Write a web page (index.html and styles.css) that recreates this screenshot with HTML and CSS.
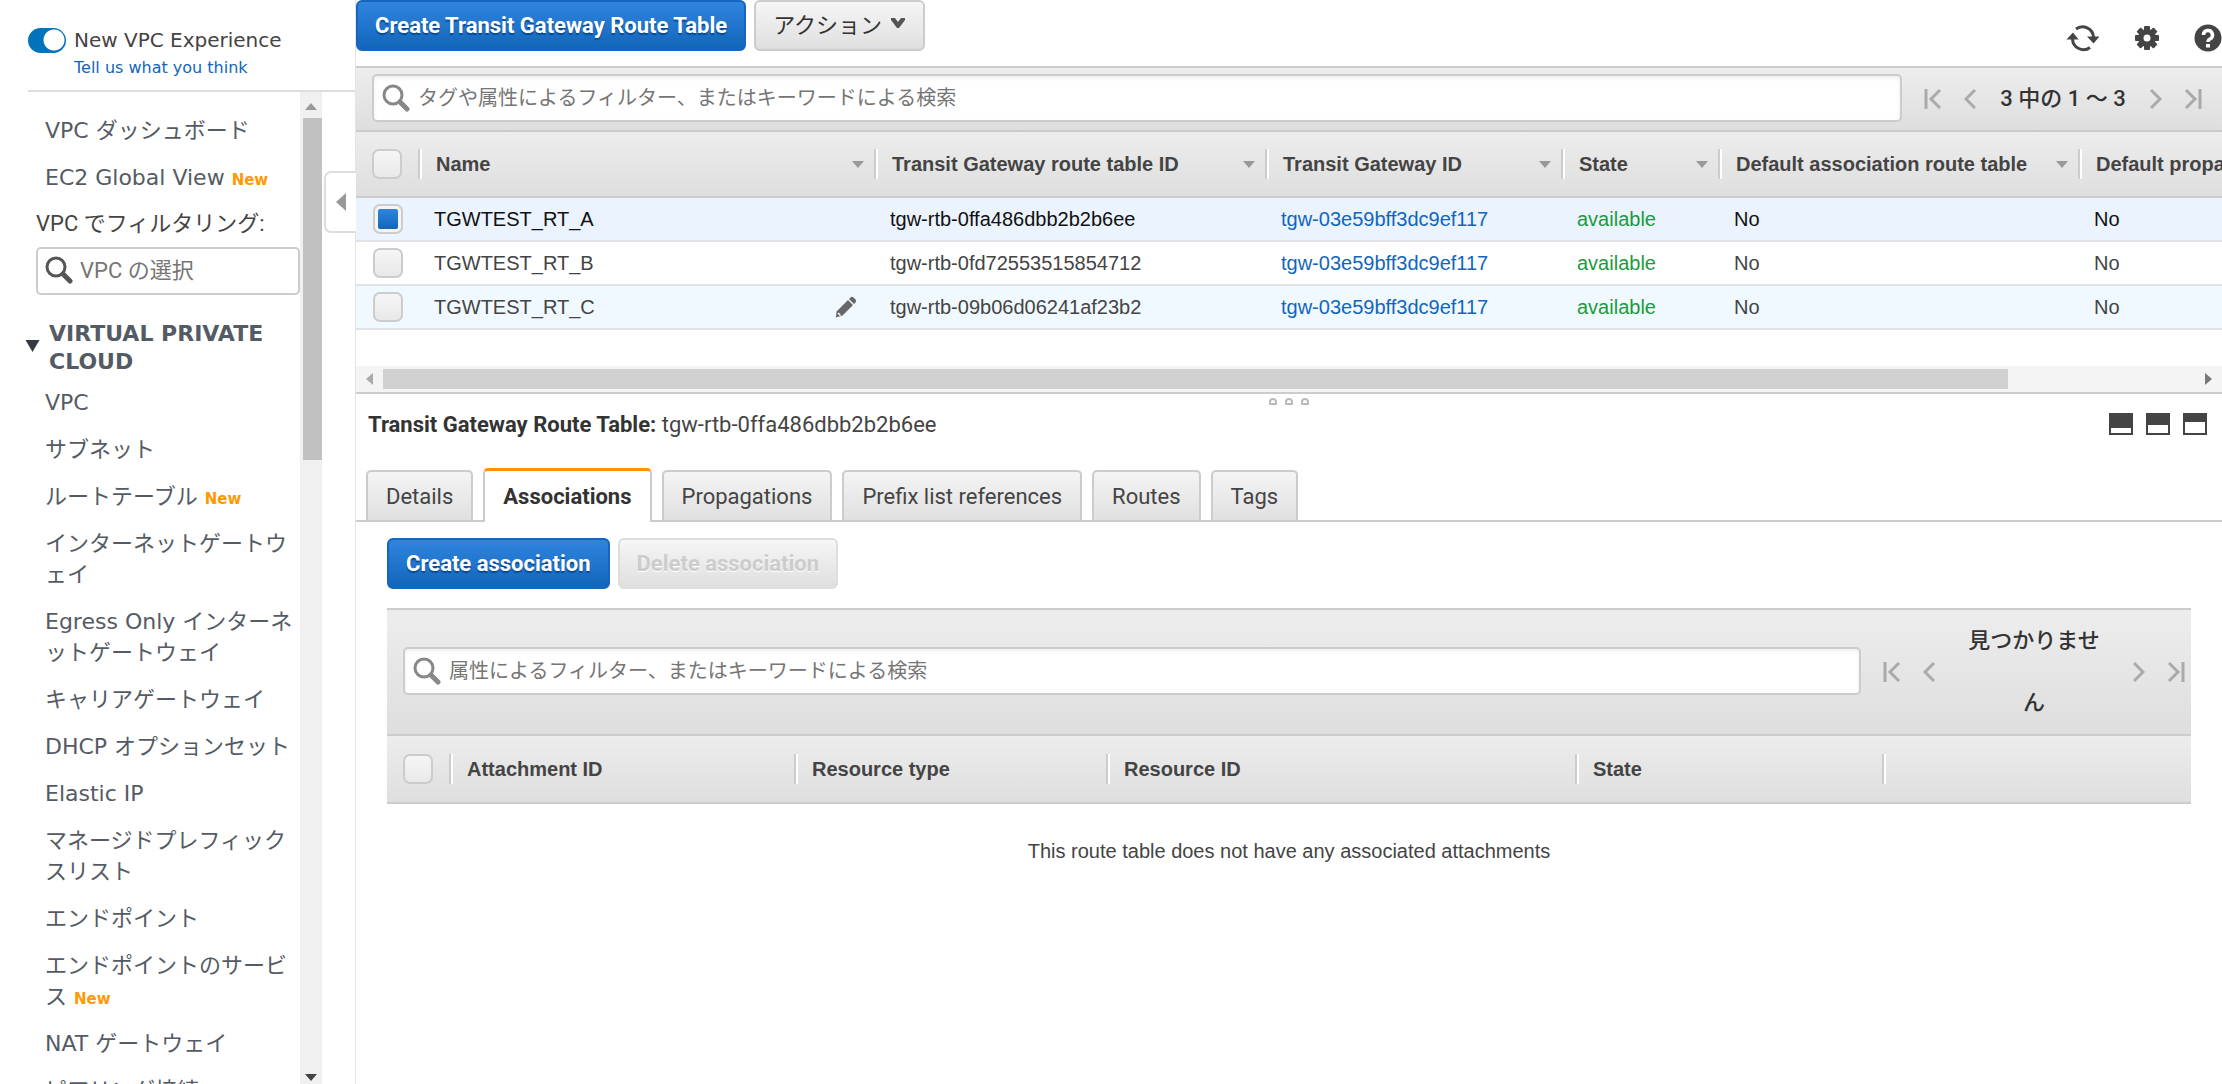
FILE: index.html
```html
<!DOCTYPE html>
<html lang="ja">
<head>
<meta charset="utf-8">
<title>Transit Gateway Route Tables</title>
<link rel="stylesheet" href="styles.css">
</head>
<body>
<svg class="defs" width="0" height="0" aria-hidden="true">
  <symbol id="i-search" viewBox="0 0 28 28"><circle cx="11" cy="11" r="9" fill="none" stroke="currentColor" stroke-width="3"/><path d="M18 18l7 7" stroke="currentColor" stroke-width="5" stroke-linecap="round"/></symbol>
  <symbol id="i-first" viewBox="0 0 18 22"><path d="M2 1v20M16 2L7 11l9 9" fill="none" stroke="currentColor" stroke-width="3"/></symbol>
  <symbol id="i-prev" viewBox="0 0 12 22"><path d="M11 2L2 11l9 9" fill="none" stroke="currentColor" stroke-width="3"/></symbol>
  <symbol id="i-next" viewBox="0 0 12 22"><path d="M1 2l9 9-9 9" fill="none" stroke="currentColor" stroke-width="3"/></symbol>
  <symbol id="i-last" viewBox="0 0 18 22"><path d="M16 1v20M2 2l9 9-9 9" fill="none" stroke="currentColor" stroke-width="3"/></symbol>
</svg>
<div class="app">
  <aside class="sidebar">
    <div class="experience">
      <input type="checkbox" class="switch" id="exp" checked>
      <div class="experience-text">
        <label for="exp">New VPC Experience</label>
        <a href="#feedback">Tell us what you think</a>
      </div>
    </div>
    <div class="side-body">
      <nav class="side-scroll">
        <ul class="links top-links">
          <li><a href="#dashboard">VPC ダッシュボード</a></li>
          <li><a href="#global">EC2 Global View</a> <span class="new">New</span></li>
        </ul>
        <div class="vpc-filter">
          <label for="vpc">VPC でフィルタリング:</label>
          <div class="vpc-box">
            <svg class="ico-search" aria-hidden="true"><use href="#i-search"/></svg>
            <input type="text" id="vpc" placeholder="VPC の選択">
          </div>
        </div>
        <h2><svg class="caret" viewBox="0 0 14 12" aria-hidden="true"><path d="M0 0h14L7 12z"/></svg>VIRTUAL PRIVATE CLOUD</h2>
        <ul class="links">
          <li><a href="#vpc">VPC</a></li>
          <li><a href="#subnet">サブネット</a></li>
          <li><a href="#rt">ルートテーブル</a> <span class="new">New</span></li>
          <li><a href="#igw">インターネットゲートウェイ</a></li>
          <li><a href="#eigw">Egress Only インターネットゲートウェイ</a></li>
          <li><a href="#cgw">キャリアゲートウェイ</a></li>
          <li><a href="#dhcp">DHCP オプションセット</a></li>
          <li><a href="#eip">Elastic IP</a></li>
          <li><a href="#pl">マネージドプレフィックスリスト</a></li>
          <li><a href="#ep">エンドポイント</a></li>
          <li><a href="#eps">エンドポイントのサービス</a> <span class="new">New</span></li>
          <li><a href="#nat">NAT ゲートウェイ</a></li>
          <li><a href="#peer">ピアリング接続</a></li>
        </ul>
      </nav>
      <div class="vbar" aria-hidden="true">
        <svg viewBox="0 0 12 8"><path d="M6 1l6 7H0z" fill="#999"/></svg>
        <div class="vtrack"><div class="vthumb"></div></div>
        <svg viewBox="0 0 12 8"><path d="M0 1h12L6 8z" fill="#444"/></svg>
      </div>
      <button class="collapse" aria-label="メニューを閉じる"><svg viewBox="0 0 10 18"><path d="M10 0v18L0 9z"/></svg></button>
    </div>
  </aside>

  <main>
    <div class="actions">
      <button class="btn primary">Create Transit Gateway Route Table</button>
      <button class="btn menu">アクション <svg class="chev" viewBox="0 0 16 12"><path d="M1 1h4l3 4 3-4h4v2L9 11H7L1 3z"/></svg></button>
      <div class="tools">
        <button aria-label="更新"><svg width="34" height="28" viewBox="0 0 34 28"><g fill="none" stroke="#444" stroke-width="3"><path d="M10 5A11 11 0 0 1 27.500 13"/><path d="M24 23.500A11 11 0 0 1 6.500 15"/></g><path d="M21 12.500h12.500l-6 7zM.5 15.500L7 8.500l5.500 7z" fill="#444"/></svg></button>
        <button aria-label="設定"><svg width="26" height="26" viewBox="-13 -13 26 26"><g fill="#444"><circle r="9"/><g id="teeth"><rect x="-3" y="-12" width="6" height="24" rx="1"/><rect x="-12" y="-3" width="24" height="6" rx="1"/></g><use href="#teeth" transform="rotate(45)"/></g><circle r="3.500" fill="#fff"/></svg></button>
        <button aria-label="ヘルプ"><svg width="28" height="28" viewBox="0 0 28 28"><circle cx="14" cy="14" r="13.500" fill="#444"/><path d="M9.500 11a4.500 4.500 0 1 1 6.500 4q-2 1-2 3" fill="none" stroke="#fff" stroke-width="3.500"/><rect x="12" y="20" width="4" height="3.500" fill="#fff"/></svg></button>
      </div>
    </div>

    <div class="toolbar">
      <div class="search">
        <svg class="ico-search" aria-hidden="true"><use href="#i-search"/></svg>
        <input type="text" aria-label="ルートテーブルの検索" placeholder="タグや属性によるフィルター、またはキーワードによる検索">
      </div>
      <div class="pager">
        <button aria-label="最初"><svg width="18" height="22"><use href="#i-first"/></svg></button>
        <button aria-label="前へ"><svg width="12" height="22"><use href="#i-prev"/></svg></button>
        <span>3 中の 1 ～ 3</span>
        <button aria-label="次へ"><svg width="12" height="22"><use href="#i-next"/></svg></button>
        <button aria-label="最後"><svg width="18" height="22"><use href="#i-last"/></svg></button>
      </div>
    </div>

    <div class="grid-wrap">
      <table class="grid routes">
        <colgroup><col class="c-check"><col class="c-name"><col class="c-rtb"><col class="c-tgw"><col class="c-state"><col class="c-assoc"><col></colgroup>
        <thead>
          <tr>
            <th><input type="checkbox" class="tick" aria-label="すべて選択"></th>
            <th><div class="head sort">Name</div></th>
            <th><div class="head sort">Transit Gateway route table ID</div></th>
            <th><div class="head sort">Transit Gateway ID</div></th>
            <th><div class="head sort">State</div></th>
            <th><div class="head sort">Default association route table</div></th>
            <th><div class="head">Default propagation route table</div></th>
          </tr>
        </thead>
        <tbody>
          <tr class="selected">
            <td><input type="checkbox" class="tick" aria-label="TGWTEST_RT_A" checked></td>
            <td>TGWTEST_RT_A</td><td>tgw-rtb-0ffa486dbb2b2b6ee</td><td><a href="#tgw">tgw-03e59bff3dc9ef117</a></td><td class="ok">available</td><td>No</td><td>No</td>
          </tr>
          <tr>
            <td><input type="checkbox" class="tick" aria-label="TGWTEST_RT_B"></td>
            <td>TGWTEST_RT_B</td><td>tgw-rtb-0fd72553515854712</td><td><a href="#tgw">tgw-03e59bff3dc9ef117</a></td><td class="ok">available</td><td>No</td><td>No</td>
          </tr>
          <tr class="hover">
            <td><input type="checkbox" class="tick" aria-label="TGWTEST_RT_C"></td>
            <td><div class="editable">TGWTEST_RT_C<svg width="22" height="22" viewBox="0 0 22 22"><path d="M15.500 1.500q1.500-1.500 3 0l2 2q1.500 1.500 0 3L19 8l-5-5zM13 4l5 5L7.500 19.500 1 21.500 1.500 15.500z" fill="#666"/><path d="M3 17l2.500 2.500" stroke="#fff" stroke-width="1.500"/></svg></div></td><td>tgw-rtb-09b06d06241af23b2</td><td><a href="#tgw">tgw-03e59bff3dc9ef117</a></td><td class="ok">available</td><td>No</td><td>No</td>
          </tr>
        </tbody>
      </table>
    </div>
    <div class="hbar" aria-hidden="true">
      <svg viewBox="0 0 7 12"><path d="M7 0v12L0 6z" fill="#aaa"/></svg>
      <div class="htrack"><div class="hthumb"></div></div>
      <svg viewBox="0 0 7 12"><path d="M0 0v12l7-6z" fill="#777"/></svg>
    </div>
    <div class="splitter" aria-hidden="true"><i></i><i></i><i></i></div>

    <section class="detail">
      <div class="detail-head">
        <h1>Transit Gateway Route Table: <span>tgw-rtb-0ffa486dbb2b2b6ee</span></h1>
        <div class="panes">
          <button class="pane low" aria-label="下"></button>
          <button class="pane mid" aria-label="中"></button>
          <button class="pane high" aria-label="上"></button>
        </div>
      </div>
      <div class="tabs" role="tablist">
        <button role="tab">Details</button>
        <button role="tab" class="active" aria-selected="true">Associations</button>
        <button role="tab">Propagations</button>
        <button role="tab">Prefix list references</button>
        <button role="tab">Routes</button>
        <button role="tab">Tags</button>
      </div>
      <div class="panel">
        <div class="panel-actions">
          <button class="btn primary">Create association</button>
          <button class="btn" disabled>Delete association</button>
        </div>
        <div class="toolbar narrow">
          <div class="search">
            <svg class="ico-search" aria-hidden="true"><use href="#i-search"/></svg>
            <input type="text" aria-label="関連付けの検索" placeholder="属性によるフィルター、またはキーワードによる検索">
          </div>
          <div class="pager">
            <button aria-label="最初"><svg width="18" height="22"><use href="#i-first"/></svg></button>
            <button aria-label="前へ"><svg width="12" height="22"><use href="#i-prev"/></svg></button>
            <span>見つかりません</span>
            <button aria-label="次へ"><svg width="12" height="22"><use href="#i-next"/></svg></button>
            <button aria-label="最後"><svg width="18" height="22"><use href="#i-last"/></svg></button>
          </div>
        </div>
        <table class="grid assoc">
          <colgroup><col class="c-check"><col class="c-att"><col class="c-type"><col class="c-res"><col class="c-st"><col></colgroup>
          <thead>
            <tr>
              <th><input type="checkbox" class="tick" aria-label="すべて選択"></th>
              <th><div class="head">Attachment ID</div></th>
              <th><div class="head">Resource type</div></th>
              <th><div class="head">Resource ID</div></th>
              <th><div class="head">State</div></th>
              <th><div class="head">&nbsp;</div></th>
            </tr>
          </thead>
          <tbody><tr><td colspan="6" class="empty">This route table does not have any associated attachments</td></tr></tbody>
        </table>
      </div>
    </section>
  </main>
</div>
</body>
</html>
```
FILE: styles.css
```css
* { box-sizing: border-box; }
body {
  margin: 0;
  background: #fff;
  color: #444;
  font: 20px "Roboto", "Noto Sans CJK JP", sans-serif;
}
button, input { font: inherit; color: inherit; }
button { border: 0; background: none; padding: 0; }
svg { display: block; flex: none; }
ul { list-style: none; margin: 0; padding: 0; }
a { text-decoration: none; color: #1166bb; }
.defs { position: absolute; }

.app { display: flex; height: 100vh; overflow: hidden; }

/* Sidebar */
.sidebar {
  flex: none;
  width: 356px;
  display: flex;
  flex-direction: column;
  border-right: 1px solid #e4e4e4;
  font-family: "DejaVu Sans", "Noto Sans CJK JP", sans-serif;
}
.experience {
  display: flex;
  gap: 8px;
  height: 92px;
  margin-left: 28px;
  padding-top: 28px;
  border-bottom: 2px solid #ddd;
}
.experience-text { display: flex; flex-direction: column; }
.experience-text label { line-height: 24px; }
.experience-text a { font-size: 16px; line-height: 32px; }
.switch {
  appearance: none;
  flex: none;
  width: 38px;
  height: 25px;
  margin: 0;
  border-radius: 13px;
  background: radial-gradient(circle at 26px 12px, #fff 10px, #0073bb 11px);
}
.side-body { flex: 1; min-height: 0; display: flex; position: relative; }
.side-scroll { width: 300px; overflow: hidden; }
.links {
  display: flex;
  flex-direction: column;
  gap: 16px;
  padding-left: 45px;
  font-size: 22px;
  line-height: 31px;
  line-break: loose;
}
.links a { color: #545b64; }
.top-links { padding-top: 23px; }
.new { color: #ff9900; font-size: 15px; font-weight: bold; line-height: 1; }
.vpc-filter {
  padding: 15px 0 0 36px;
  font: 22px/31px "Roboto", "Noto Sans CJK JP", sans-serif;
}
.vpc-filter label { display: block; margin-bottom: 8px; }
.vpc-box {
  display: flex;
  align-items: center;
  gap: 7px;
  height: 48px;
  padding: 0 0 2px 7px;
  border: 2px solid #ccc;
  border-radius: 5px;
}
.vpc-box .ico-search { color: #555; }
.vpc-box input { flex: 1; min-width: 0; border: 0; background: none; padding: 0; }
input::placeholder { color: #757575; opacity: 1; }
.ico-search { width: 28px; height: 28px; color: #888; }
.sidebar h2 {
  position: relative;
  margin: 25px 0 11px;
  padding-left: 49px;
  font-size: 22px;
  line-height: 28px;
  color: #545b64;
}
.caret { position: absolute; left: 25px; top: 20px; width: 15px; height: 12px; fill: #333a42; }
.vbar {
  flex: none;
  width: 22px;
  display: flex;
  flex-direction: column;
  align-items: center;
  background: #f0f0f0;
}
.vbar > svg { width: 12px; height: 8px; margin: 10px 0 8px; }
.vbar > svg:last-child { margin: 5px 0 3px; }
.vtrack { flex: 1; align-self: stretch; padding-left: 3px; }
.vthumb { height: 36%; background: #c1c1c1; }
.collapse {
  position: absolute;
  right: -1px;
  top: 79px;
  width: 32px;
  height: 62px;
  padding-left: 10px;
  border: 2px solid #ddd;
  border-right: 0;
  border-radius: 7px 0 0 7px;
  background: #fff;
}
.collapse svg { width: 10px; height: 18px; fill: #999; }

/* Main */
main { flex: 1; min-width: 0; display: flex; flex-direction: column; }
.actions { flex: none; display: flex; align-items: flex-start; gap: 8px; height: 66px; }
.btn {
  display: flex;
  align-items: center;
  gap: 8px;
  height: 51px;
  padding: 0 17px;
  border: 2px solid #ccc;
  border-radius: 6px;
  background: linear-gradient(#f6f6f6, #dfdfdf);
  font-size: 22px;
  white-space: nowrap;
}
.menu { padding-bottom: 5px; color: #333; }
.btn.primary {
  font-weight: bold;
  color: #fff;
  border-color: #1467bd;
  background: linear-gradient(#3084de, #1166bb);
  text-shadow: 0 2px 1px #0a4a90;
}
.btn:disabled { font-weight: bold; color: #ccc; border-color: #ddd; text-shadow: 0 1px 0 #fff; }
.chev { width: 16px; height: 12px; fill: #555; }
.tools { display: flex; align-items: center; gap: 34px; margin-left: auto; padding-top: 24px; }

.toolbar {
  flex: none;
  display: flex;
  align-items: center;
  gap: 22px;
  padding: 0 20px 0 16px;
  border-top: 2px solid #ccc;
  background: linear-gradient(#ededed, #dedede);
}
.search {
  flex: 1;
  display: flex;
  align-items: center;
  height: 48px;
  margin-bottom: 2px;
  padding-left: 8px;
  gap: 8px;
  border: 2px solid #ccc;
  border-radius: 5px;
  background: #fff;
  box-shadow: inset 0 2px 4px #eee;
}
.search input { flex: 1; min-width: 0; border: 0; background: none; padding: 0; }
.pager { display: flex; align-items: center; gap: 22px; color: #aaa; }
.pager span {
  min-width: 130px;
  font-size: 22px;
  font-weight: 500;
  line-height: 62px;
  color: #333;
  text-align: center;
}
.narrow { padding-right: 6px; }
.narrow .pager span { width: 132px; margin: 0 11px; }

.grid { width: 100%; border-collapse: collapse; table-layout: fixed; font-family: "Liberation Sans", sans-serif; }
.grid thead { background: linear-gradient(#ededed, #dedede); }
.grid th { height: 66px; padding: 0; border-top: 2px solid #ccc; border-bottom: 2px solid #ccc; text-align: left; }
.grid.assoc th { height: 68px; }
.grid th:first-child { padding-left: 16px; }
.grid td { height: 44px; padding: 0 0 0 16px; border-bottom: 2px solid #e0e3e8; white-space: nowrap; }
.grid td:first-child { padding-left: 17px; }
.head {
  display: flex;
  align-items: center;
  justify-content: space-between;
  height: 30px;
  padding: 0 10px 0 16px;
  border-left: 2px solid #ccc;
  box-shadow: inset 2px 0 0 #fff;
  white-space: nowrap;
  overflow: hidden;
}
.sort::after { content: ""; border: 6px solid transparent; border-top: 7px solid #999; border-bottom: 0; }
.c-check { width: 62px; }
.c-name { width: 456px; }
.c-rtb { width: 391px; }
.c-tgw { width: 296px; }
.c-state { width: 157px; }
.c-assoc { width: 360px; }
.c-att { width: 345px; }
.c-type { width: 312px; }
.c-res { width: 469px; }
.c-st { width: 307px; }
.selected { background: #eaf3fe; color: #111; }
.hover { background: #f0f9ff; }
.ok { color: #1a9b3c; }
.editable { display: flex; align-items: center; justify-content: space-between; padding-right: 17px; }
.tick {
  appearance: none;
  display: block;
  width: 30px;
  height: 30px;
  margin: 0;
  border: 2px solid #ccc;
  border-radius: 7px;
  background: linear-gradient(#f6f6f6, #e9e9e9);
}
.tick:checked { background: linear-gradient(#3084de, #1166bb) content-box, #f4f4f4; padding: 3px; }

.grid-wrap { flex: none; height: 236px; overflow: hidden; }
.hbar {
  flex: none;
  display: flex;
  align-items: center;
  height: 28px;
  border-bottom: 2px solid #ccc;
  background: #f4f4f4;
}
.hbar > svg { width: 7px; height: 12px; margin: 0 10px; }
.htrack { flex: 1; height: 20px; }
.hthumb { width: calc(90% - 6px); height: 100%; background: #d1d1d1; }
.splitter { flex: none; display: flex; justify-content: center; gap: 8px; height: 15px; padding-top: 4px; }
.splitter i { width: 8px; height: 7px; border: 2px solid #bbb; border-radius: 4px 4px 0 0; }

/* Detail */
.detail-head { display: flex; align-items: center; justify-content: space-between; height: 30px; padding: 0 15px 0 12px; }
.detail h1 { margin: 0; font-size: 22px; color: #333; }
.detail h1 span { font-weight: normal; color: #444; }
.panes { display: flex; gap: 13px; }
.pane { width: 24px; height: 22px; border: 2px solid #444; border-top-width: 9px; }
.pane.low { border-top-width: 15px; }
.pane.mid { border-top-width: 12px; }
.tabs {
  display: flex;
  align-items: flex-end;
  gap: 10px;
  height: 83px;
  padding-left: 10px;
  border-bottom: 2px solid #ccc;
}
.tabs button {
  height: 50px;
  padding: 0 18px;
  border: 2px solid #ccc;
  border-bottom: 0;
  border-radius: 5px 5px 0 0;
  background: linear-gradient(#f4f4f4, #e0e0e0);
  font-size: 22px;
}
.tabs .active {
  height: 54px;
  margin-bottom: -2px;
  border-top: 3px solid #ff9200;
  background: #fff;
  font-weight: bold;
  color: #333;
}
.panel { padding: 16px 31px 0; }
.panel-actions { display: flex; gap: 8px; margin-bottom: 19px; }
.grid td.empty:first-child { height: 96px; padding: 0; border: 0; text-align: center; }
```
